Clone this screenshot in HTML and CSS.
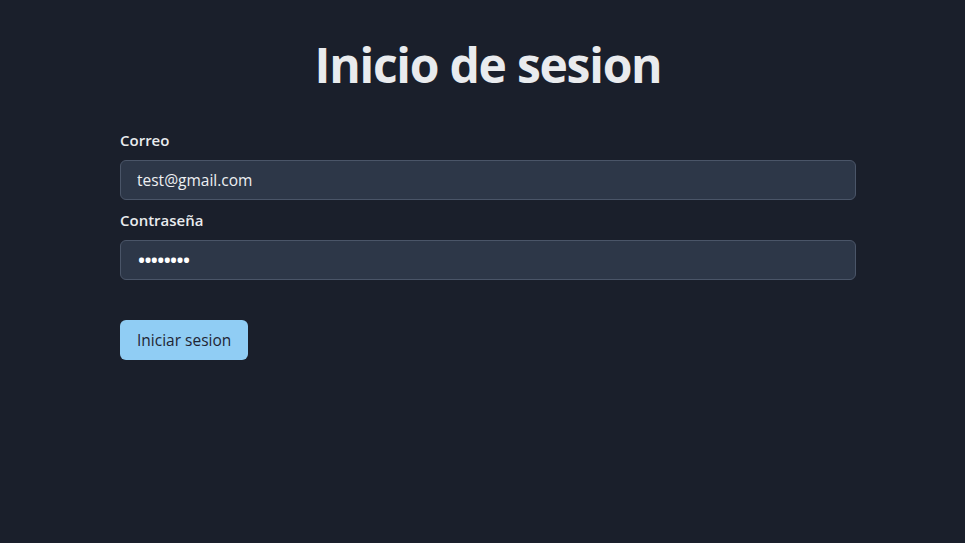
FILE: index.html
```html
<!DOCTYPE html>
<html lang="es">
<head>
<meta charset="utf-8">
<title>Inicio de sesion</title>
<link rel="stylesheet" href="styles.css">
</head>
<body>
<main class="page">
  <h1 class="title">Inicio de sesion</h1>
  <form class="form">
    <div class="field">
      <label class="label" for="email">Correo</label>
      <input class="input" id="email" type="email" value="test@gmail.com">
    </div>
    <div class="field">
      <label class="label" for="pass">Contraseña</label>
      <input class="input input-pass" id="pass" type="password" value="12345678">
    </div>
    <button class="button" type="button">Iniciar sesion</button>
  </form>
</main>
</body>
</html>
```

FILE: styles.css
```css
html, body {
  margin: 0;
  padding: 0;
  background: #1a1f2b;
  color: #e9ebee;
  font-family: "Open Sans", "Noto Sans", sans-serif;
}
.page {
  width: 736px;
  margin-left: 120px;
  padding-top: 36px;
}
.title {
  margin: 0;
  text-align: center;
  font-size: 48px;
  font-weight: 700;
  line-height: 1.2;
  letter-spacing: -1.25px;
}
.form {
  display: flex;
  flex-direction: column;
  gap: 8px;
  margin-top: 34px;
}
.field {
  display: flex;
  flex-direction: column;
}
.label {
  font-size: 15px;
  font-weight: 600;
  line-height: 24px;
  margin-bottom: 8px;
}
.input {
  box-sizing: border-box;
  height: 40px;
  width: 100%;
  padding: 0 16px;
  border: 1px solid #4a5568;
  border-radius: 6px;
  background: #2d3748;
  color: #eef0f3;
  font-family: inherit;
  font-size: 15.5px;
  outline: none;
}
.input-pass {
  color: #ffffff;
  font-size: 24px;
  letter-spacing: -2.6px;
}
.button {
  align-self: flex-start;
  margin-top: 32px;
  height: 40px;
  padding: 0 17px;
  border: none;
  border-radius: 6px;
  background: #90cdf4;
  color: #1f2533;
  font-family: inherit;
  font-size: 15.5px;
  font-weight: 400;
}
```
